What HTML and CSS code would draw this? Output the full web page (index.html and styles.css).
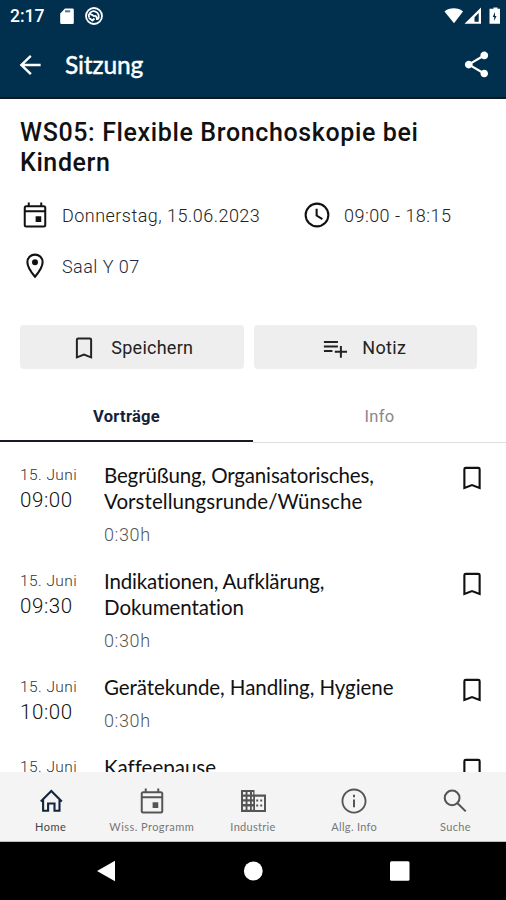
FILE: index.html
```html
<!DOCTYPE html>
<html lang="de">
<head>
<meta charset="utf-8">
<title>Sitzung</title>
<link rel="stylesheet" href="styles.css">
</head>
<body>
<svg class="defs" aria-hidden="true">
  <symbol id="bookmark" viewBox="0 0 24 24"><path fill="none" stroke="currentColor" stroke-width="1.700" d="M5.900 20V5q0-1.100 1.100-1.100h10q1.100 0 1.100 1.100v15L12 17.700z"/></symbol>
  <symbol id="calendar" viewBox="0 0 24 24"><path fill="none" stroke="currentColor" stroke-width="1.600" d="M5 4.900h14q1.200 0 1.200 1.200V20q0 1.200-1.200 1.200H5q-1.200 0-1.200-1.200V6.100q0-1.200 1.200-1.200zM3.800 9h16.400M7 2v3M17 2v3"/><path d="M12.500 13H17v4.600h-4.500z"/></symbol>
</svg>
<div class="app">
  <header class="header">
    <div class="status">
      <span class="time">2:17</span>
      <svg class="sd" viewBox="0 0 14 17"><path d="M5 .5h7.500a1.300 1.300 0 0 1 1.300 1.300v13a1.300 1.300 0 0 1-1.300 1.300H1.500A1.300 1.300 0 0 1 .2 14.800V5.500z"/><path class="sd-slots" d="M5 3.300h5.200"/></svg>
      <svg class="sync" viewBox="0 0 20 20"><circle cx="10" cy="10" r="8"/><path d="M5 11.500a5 5 0 1 1 8.500 2M6 8.500c2-1 3 2 4.500 1.500s2.500 1 2.500 4M5 12l3.500 2.500 2-2"/></svg>
      <svg class="signals" viewBox="0 0 56 18"><path d="M.5 4.500C5 .2 14.500.2 19 4.500L10 16.300z"/><path fill-rule="evenodd" d="M20.500 16.800L37 .5v16.300zM30.500 14.800h4.200V6l-4.200 4.300z"/><path fill-rule="evenodd" d="M47.500 1.800h2V.500h4v1.300h2.500v15h-10.500v-15zM51 5l-2.300 5h1.500v4l2.300-5H51z"/></svg>
    </div>
    <div class="bar">
      <svg class="back" viewBox="0 0 24 24"><path d="M20.500 11H7.500l5.800-5.600L12 4l-8.300 8 8.300 8 1.400-1.400L7.500 13h13z"/></svg>
      <h1 class="bar-title">Sitzung</h1>
      <svg class="share" viewBox="0 0 24 24"><path d="M18 16.080c-.76 0-1.440.3-1.960.770L8.910 12.700c.05-.23.09-.46.09-.7s-.04-.47-.09-.7l7.050-4.110c.54.5 1.250.81 2.040.81 1.660 0 3-1.340 3-3s-1.340-3-3-3-3 1.340-3 3c0 .24.04.47.09.7L8.040 9.810C7.500 9.310 6.790 9 6 9c-1.660 0-3 1.340-3 3s1.340 3 3 3c.79 0 1.500-.31 2.040-.81l7.120 4.160c-.05.21-.08.43-.08.65 0 1.610 1.310 2.920 2.920 2.920s2.920-1.310 2.920-2.920-1.310-2.920-2.920-2.920z"/></svg>
    </div>
  </header>

  <main class="content">
    <h2 class="title">WS05: Flexible Bronchoskopie bei <span class="title-end">Kindern</span></h2>
    <div class="meta">
      <svg class="icon"><use href="#calendar"/></svg><span class="date">Donnerstag, 15.06.2023</span>
      <svg class="icon clock" viewBox="0 0 24 24"><path class="line" d="M12 2.900a9.100 9.100 0 1 0 0 18.200a9.100 9.100 0 1 0 0-18.200zM11.700 7v5.400l4.600 2.900"/></svg><span class="hours">09:00 - 18:15</span>
    </div>
    <div class="meta place">
      <svg class="icon" viewBox="0 0 24 24"><path class="line" d="M12 2.900C8.500 2.900 5.900 5.600 5.900 9c0 4.400 6.100 11.600 6.100 11.600S18.100 13.400 18.100 9c0-3.400-2.600-6.100-6.100-6.100z"/><circle cx="12" cy="9" r="2.400"/></svg><span class="room">Saal Y 07</span>
    </div>
    <div class="actions">
      <button class="action"><svg class="action-icon"><use href="#bookmark"/></svg><span class="save">Speichern</span></button>
      <button class="action"><svg class="action-icon add" viewBox="0 0 24 24"><path d="M2.500 6h12v1.700h-12zM2.500 9.900h12v1.700h-12zM2.500 13.800h7.300v1.700H2.500zM16.200 10.300h1.700v4h4.400V16h-4.400v4.300h-1.700V16h-4.400v-1.700h4.400z"/></svg><span class="note">Notiz</span></button>
    </div>
    <div class="tabs">
      <div class="tab active">Vorträge</div>
      <div class="tab">Info</div>
    </div>
    <div class="list">
      <article class="row">
        <div class="when"><span class="day">15. Juni</span><span class="start">09:00</span></div>
        <div class="talk"><div class="name"><span class="l1">Begrüßung, Organisatorisches,</span><br><span class="l2">Vorstellungsrunde/Wünsche</span></div><div class="length">0:30h</div></div>
        <svg class="mark"><use href="#bookmark"/></svg>
      </article>
      <article class="row">
        <div class="when"><span class="day">15. Juni</span><span class="start">09:30</span></div>
        <div class="talk"><div class="name"><span class="l3">Indikationen, Aufklärung,</span><br><span class="l4">Dokumentation</span></div><div class="length">0:30h</div></div>
        <svg class="mark"><use href="#bookmark"/></svg>
      </article>
      <article class="row">
        <div class="when"><span class="day">15. Juni</span><span class="start">10:00</span></div>
        <div class="talk"><div class="name"><span class="l5">Gerätekunde, Handling, Hygiene</span></div><div class="length">0:30h</div></div>
        <svg class="mark"><use href="#bookmark"/></svg>
      </article>
      <article class="row">
        <div class="when"><span class="day">15. Juni</span></div>
        <div class="talk"><div class="name"><span class="l6">Kaffeepause</span></div></div>
        <svg class="mark"><use href="#bookmark"/></svg>
      </article>
    </div>
  </main>

  <nav class="nav">
    <div class="item current"><svg class="nav-icon home" viewBox="0 0 30 30"><path d="M4.800 15.500L15.300 5l10.500 10.500M7.100 13.500v11.300h5V17.500h6.400v7.300h5V13.500"/></svg><span>Home</span></div>
    <div class="item"><svg class="nav-icon"><use href="#calendar"/></svg><span class="programm">Wiss. Programm</span></div>
    <div class="item"><svg class="nav-icon building" viewBox="0 0 26 24"><path fill-rule="evenodd" d="M1 1h13.500v4.500H26V23H1zM3 3v2.500h2.600V3zm4.500 0v2.500H10V3zM12 3v2.500h1.200V3zM3 7.700v2.600h2.600V7.700zm4.500 0v2.600H10V7.700zm4.300 0v2.600h1.400V7.700zM3 12.500v2.600h2.600v-2.600zm4.500 0v2.600H10v-2.600zm4.300 0v2.600h1.400v-2.600zM3 17.500v3.200h2.600v-3.200zm4.500 0v3.200H10v-3.200zm4.300 0v3.200h1.400v-3.200zM15 7.700V21h9V7.700z"/><path d="M16.200 10.500h2v2h-2zm4 0h2v2h-2zM16.200 15.500h2v2h-2zm4 0h2v2h-2z"/></svg><span class="industrie">Industrie</span></div>
    <div class="item"><svg class="nav-icon" viewBox="0 0 24 24"><path d="M11.200 7h1.600v1.900h-1.600zm0 3.700h1.600V17h-1.600zm.8-8.700C6.480 2 2 6.480 2 12s4.480 10 10 10 10-4.480 10-10S17.520 2 12 2zm0 18.500c-4.700 0-8.500-3.800-8.500-8.500S7.300 3.500 12 3.500s8.500 3.800 8.500 8.500-3.800 8.500-8.500 8.500z"/></svg><span class="allg">Allg. Info</span></div>
    <div class="item"><svg class="nav-icon" viewBox="0 0 24 24"><path class="line" d="M9.700 3.600a5.900 5.900 0 1 0 0 11.800a5.900 5.900 0 1 0 0-11.800zM14 13.800l6.600 6.500"/></svg><span class="suche">Suche</span></div>
  </nav>
  <footer class="system">
    <svg viewBox="0 0 22 22"><path d="M2 11L20 .700v20.600z"/></svg>
    <svg viewBox="0 0 22 22"><circle cx="11.300" cy="11" r="9.400"/></svg>
    <svg viewBox="0 0 22 22"><rect x="1" y="1.300" width="19.500" height="19.500" rx="1.500"/></svg>
  </footer>
</div>
</body>
</html>
```
FILE: styles.css
```css
* { box-sizing: border-box; }
body { margin: 0; background: #fff; font-family: Roboto, sans-serif; color: #111; }
svg { display: block; flex: none; fill: currentColor; }
.defs { width: 0; height: 0; position: absolute; }
.line { fill: none; stroke: currentColor; stroke-width: 1.650; }
.app { width: 506px; height: 900px; display: flex; flex-direction: column; overflow: hidden; }

.header { height: 99px; flex: none; background: #00304d; border-bottom: 2px solid #10171f; color: #fff; }
.status { height: 32px; display: flex; align-items: center; padding: 0 7px 0 10px; }
.time { width: 50px; font-size: 17.500px; font-weight: 500; line-height: 32px; letter-spacing: 0; }
.sd { width: 14px; height: 17px; }
.sd-slots { stroke: #5d7688; stroke-width: 2; fill: none; }
.sync { width: 20px; height: 20px; margin-left: 10px; fill: none; stroke: #fff; stroke-width: 1.800; }
.signals { width: 56px; height: 18px; margin-left: auto; margin-right: -1px; }
.bar { height: 65px; display: flex; align-items: center; padding: 0 15px; }
.back { width: 30px; height: 30px; }
.bar-title { margin: 0 0 0 20px; font: 500 24.500px/32px Lato, sans-serif; letter-spacing: -.2px; -webkit-text-stroke: .3px; }
.share { width: 31px; height: 31px; margin-left: auto; margin-right: -1px; }

.content { flex: 1; min-height: 0; overflow: hidden; }
.title { margin: 19px 20px 0; width: 440px; font-size: 25px; line-height: 30px; font-weight: 500; color: #111; letter-spacing: .630px; }
.title-end { letter-spacing: .600px; }
.meta { display: flex; align-items: center; height: 30px; margin: 22px 20px 0; color: #111; font-size: 18px; }
.meta span { font-weight: 300; color: #222; }
.icon { width: 30px; height: 30px; }
.date { width: 240px; margin-left: 12px; letter-spacing: .470px; }
.clock { margin-left: 0; }
.hours { margin-left: 12px; letter-spacing: .470px; }
.place { margin-top: 21px; }
.meta .room { margin-left: 12px; color: #1b2a44; letter-spacing: .450px; }
.actions { display: flex; gap: 10px; margin: 44px 29px 0 20px; }
.action { flex: 1; height: 44px; border: 0; border-radius: 4px; background: #eee; padding: 2px 0 0; display: flex; align-items: center; justify-content: center; gap: 13px; font: 400 18px/24px Roboto, sans-serif; color: #222; }
.action-icon { width: 28px; height: 28px; }
.add { margin-left: -3px; }
.save { letter-spacing: .250px; }
.note { letter-spacing: .300px; }
.tabs { display: flex; height: 74px; }
.tab { flex: 1; text-align: center; font-size: 16.500px; line-height: 21px; padding-top: 37px; border-bottom: 1px solid #ddd; color: #888; letter-spacing: .300px; }
.tab.active { color: #14213d; font-weight: 700; border-bottom: 2px solid #1a1a22; height: 73px; }
.row { display: flex; padding: 0 19px 0 20px; margin-bottom: 23px; }
.row:nth-child(2) { margin-bottom: 22.500px; }
.list { padding-top: 20px; }
.when { width: 84px; display: flex; flex-direction: column; padding-top: 1px; }
.day { font-size: 15.500px; line-height: 22px; color: #333; letter-spacing: .430px; font-weight: 300; }
.start { font-size: 20.500px; line-height: 28px; color: #111; font-weight: 300; letter-spacing: .600px; }
.talk { flex: 1; }
.name { font: 400 20.500px/26px Lato, sans-serif; color: #111; margin-top: -1px; font-variant-ligatures: none; }
.l1, .l3 { letter-spacing: -.150px; }
.l2 { letter-spacing: .070px; }
.l4, .l5 { letter-spacing: -.060px; }
.length { margin-top: 10px; font-size: 18px; line-height: 21px; color: #555; font-weight: 300; letter-spacing: .600px; padding-bottom: 1px; }
.mark { width: 30px; height: 30px; color: #111; }

.nav { flex: none; height: 70px; background: #f4f4f4; border-bottom: 1px solid #bbb; display: flex; }
.item { flex: 1; display: flex; flex-direction: column; align-items: center; padding-top: 14px; color: #555; font: 400 11px/15px Lato, sans-serif; white-space: nowrap; }
.item span { margin-top: 3px; color: #777; }
.item.current span { color: #444; letter-spacing: .500px; }
.item .programm { letter-spacing: .450px; }
.item .industrie, .item .allg, .item .suche { letter-spacing: .300px; }
.nav-icon { width: 30px; height: 30px; }
.building { width: 26px; height: 24px; margin: 3px 0; }
.home { fill: none; stroke: #14263e; stroke-width: 2.100; }
.system { flex: none; height: 58px; background: #000; color: #fff; display: flex; align-items: center; justify-content: center; gap: 125px; }
.system svg { width: 22px; height: 22px; }
```
